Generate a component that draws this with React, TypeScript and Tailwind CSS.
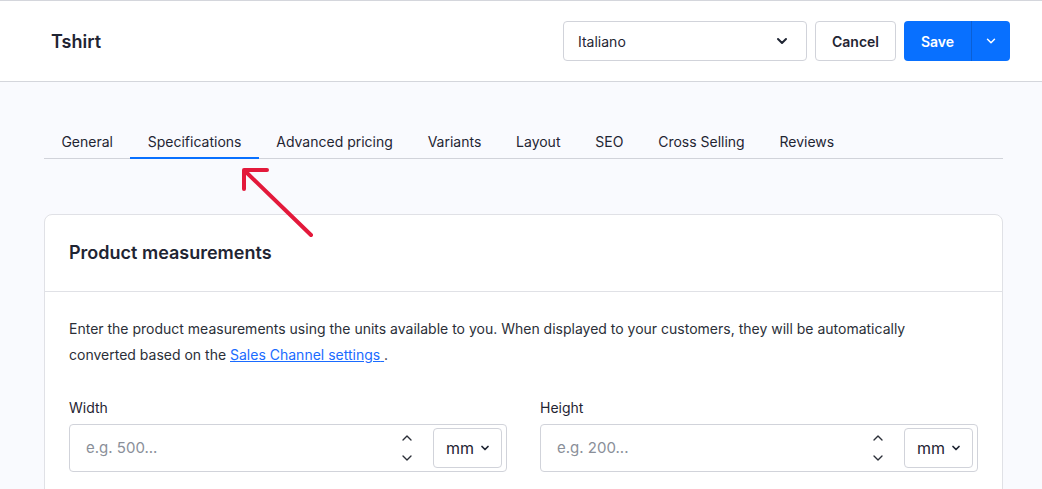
import { ChevronDown, ChevronUp } from "lucide-react";

const tabs = ["General", "Specifications", "Advanced pricing", "Variants", "Layout", "SEO", "Cross Selling", "Reviews"];

function UnitField({ label, placeholder }: { label: string; placeholder: string }) {
  return (
    <div className="flex-1">
      <div className="text-[14px] leading-4 text-[#1f2533] mb-2">{label}</div>
      <div className="h-12 flex items-center border border-[#d1d3da] rounded-[4px] bg-white pl-4 pr-1">
        <span className="flex-1 text-[15px] text-[#8a8f99]">{placeholder}</span>
        <div className="flex flex-col items-center mr-[18px] text-[#2b2f38]">
          <ChevronUp className="w-4 h-4" strokeWidth={2} />
          <div className="h-1" />
          <ChevronDown className="w-4 h-4" strokeWidth={2} />
        </div>
        <div className="h-10 w-[69px] border border-[#d1d3da] rounded-[4px] flex items-center justify-between pl-3 pr-2.5 text-[16px] text-[#1f2533]">
          <span>mm</span>
          <ChevronDown className="w-3 h-3" strokeWidth={3.5} />
        </div>
      </div>
    </div>
  );
}

export default function App() {
  return (
    <div className="relative min-h-[489px] bg-[#f9fafe] font-['Inter',sans-serif] text-[#1f2533]">
      {/* header */}
      <div className="h-[82px] bg-white border-t border-b border-[#d4d6dc] flex items-center pl-[51px] pr-[32px]">
        <h1 className="flex-1 text-[18px] font-semibold">Tshirt</h1>
        <div className="w-[244px] h-10 border border-[#d1d3da] rounded-[4px] flex items-center justify-between pl-[14px] pr-4 text-[14px]">
          <span>Italiano</span>
          <ChevronDown className="w-4 h-4" strokeWidth={3} />
        </div>
        <button className="ml-[8px] w-[81px] h-10 border border-[#d1d3da] rounded-[4px] bg-white text-[14px] font-semibold">
          Cancel
        </button>
        <div className="ml-[8px] h-10 flex rounded-[4px] overflow-hidden bg-[#0870ff] text-white">
          <button className="w-[67px] text-[14px] font-semibold">Save</button>
          <div className="w-px bg-[#0a5fd6]" />
          <div className="w-[38px] flex items-center justify-center">
            <ChevronDown className="w-3.5 h-3.5" strokeWidth={2.5} />
          </div>
        </div>
      </div>

      {/* tabs */}
      <div className="ml-[44px] w-[959px] mt-[42px] flex border-b border-[#d1d3da]">
        {tabs.map((t, i) => (
          <div
            key={t}
            className={
              i === 1
                ? "px-[17.4px] pt-[7px] pb-[5px] text-[14px] border-b-2 border-[#0870ff] -mb-px"
                : "px-[17.4px] pt-[7px] pb-[6px] text-[14px]"
            }
          >
            {t}
          </div>
        ))}
      </div>

      {/* card */}
      <div className="ml-[44px] w-[959px] mt-[55px] bg-white border border-[#e0e1e6] rounded-lg">
        <div className="h-[77px] px-6 flex items-center border-b border-[#e0e1e6]">
          <h2 className="text-[18px] font-semibold pb-[1px]">Product measurements</h2>
        </div>
        <div className="px-6 pt-6 pb-8">
          <p className="max-w-[870px] text-[14px] leading-[26px] text-[#2b2f38] mb-8">
            Enter the product measurements using the units available to you. When displayed to your customers, they will be automatically
            converted based on the <a className="text-[#1a6bff] underline">Sales Channel settings</a>
            <span className="text-[#1a6bff] underline"> </span>.
          </p>
          <div className="flex gap-[33px]">
            <UnitField label="Width" placeholder="e.g. 500..." />
            <UnitField label="Height" placeholder="e.g. 200..." />
          </div>
        </div>
      </div>

      {/* annotation arrow */}
      <svg className="absolute left-0 top-0 pointer-events-none" width="1042" height="489">
        <g stroke="#e3193b" strokeWidth="4" strokeLinecap="round" strokeLinejoin="round" fill="none">
          <line x1="311" y1="235" x2="246" y2="172" />
          <polyline points="244,189 244,170 267,170" />
        </g>
      </svg>
    </div>
  );
}
